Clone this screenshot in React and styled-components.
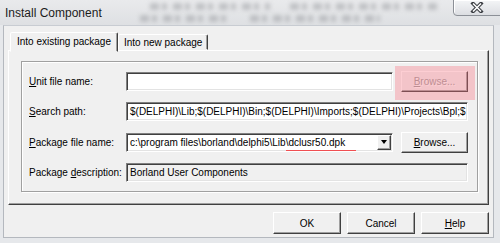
import React from 'react';
import styled, { createGlobalStyle } from 'styled-components';

const Global = createGlobalStyle`
  html, body { margin: 0; padding: 0; background: #e4e6e9; }
  body { font-family: "Liberation Sans", Arial, sans-serif; font-size: 10px; color: #000; }
`;

const Window = styled.div`
  width: 500px;
  height: 243px;
  background: #e6e8eb;
  overflow: hidden;
  display: flex;
  flex-direction: column;
`;

const TitleBar = styled.div`
  position: relative;
  height: 25px;
  flex: none;
  display: flex;
  align-items: center;
  padding-left: 5px;
  background: linear-gradient(#e9eaec, #dee0e3);
  overflow: hidden;
`;

const Title = styled.span`
  position: relative;
  z-index: 1;
  font-size: 12px;
  color: #1c1c1c;
  margin-top: 1px;
`;

// blurred page content seen through the glass frame
const Smudge = styled.div`
  position: absolute;
  left: ${p => p.x}px;
  top: ${p => p.y}px;
  width: ${p => p.w}px;
  height: 7px;
  background: repeating-linear-gradient(90deg, #9a9ca0 0 9px, transparent 9px 12px, #9a9ca0 12px 17px, transparent 17px 23px);
  opacity: 0.5;
  filter: blur(2.2px);
`;

const CloseBox = styled.div`
  position: absolute;
  left: 453px;
  top: -1px;
  width: 52px;
  height: 17px;
  border: 1px solid #8c9097;
  border-radius: 0 0 4px 4px;
  background: linear-gradient(#f4f5f7, #dcdee2);
  box-shadow: inset 1px 1px #fff;
  display: flex;
  align-items: center;
  padding-left: 16px;
  box-sizing: border-box;
`;

const Client = styled.div`
  margin: 0 6px 5px 3px;
  height: 213px;
  box-sizing: border-box;
  background: #f0f0f0;
  border: 1px solid #b4b8be;
  border-top-color: #c8ccd2;
  display: flex;
  flex-direction: column;
  padding: 6px 4px 3px 4px;
`;

const TabStrip = styled.div`
  height: 18px;
  display: flex;
  align-items: flex-end;
  padding-left: 2px;
  position: relative;
  z-index: 1;
`;

const Tab = styled.div`
  box-sizing: border-box;
  height: ${p => (p.active ? '20px' : '16px')};
  margin-bottom: ${p => (p.active ? '-2px' : '0')};
  padding: ${p => (p.active ? '3px 6px 0' : '2px 5px 0')};
  background: #f0f0f0;
  border: 1px solid;
  border-color: #fff #404040 transparent #fff;
  box-shadow: inset -1px 0 #a0a0a0;
  border-radius: 2px 2px 0 0;
  white-space: nowrap;
`;

const Page = styled.div`
  height: 155px;
  box-sizing: border-box;
  border: 1px solid;
  border-color: #fff #404040 #404040 #fff;
  box-shadow: inset -1px -1px #a0a0a0;
  padding: 10px 10px 12px 12px;
  display: flex;
`;

const Group = styled.div`
  flex: 1;
  border: 1px solid #a0a0a0;
  box-shadow: inset 1px 1px #fff, 1px 1px #fff;
  padding: 10px 9px 9px 7px;
  display: grid;
  grid-template-columns: 97px 1fr;
  grid-template-rows: repeat(4, 19px);
  row-gap: 11.33px;
  align-items: center;
`;

const Label = styled.label`
  white-space: nowrap;
  u { text-decoration-thickness: 1px; text-underline-offset: 1px; }
`;

const FieldRow = styled.div`
  display: flex;
  align-items: center;
  gap: 8px;
  height: 19px;
`;

const Field = styled.div`
  flex: 1;
  height: 19px;
  box-sizing: border-box;
  border: 1px solid;
  border-color: #808080 #fff #fff #808080;
  box-shadow: inset 1px 1px #404040, inset -1px -1px #e3e3e3;
  background: ${p => (p.flat ? '#f0f0f0' : '#fff')};
  padding: 0 3px;
  display: flex;
  align-items: center;
  white-space: nowrap;
  overflow: hidden;
  position: relative;
`;

const DropButton = styled.div`
  position: absolute;
  right: 1px;
  top: 1px;
  bottom: 1px;
  width: 14px;
  box-sizing: border-box;
  background: #f0f0f0;
  border: 1px solid;
  border-color: #fff #404040 #404040 #fff;
  box-shadow: inset -1px -1px #a0a0a0;
  display: flex;
  align-items: center;
  justify-content: center;
  &::after {
    content: '';
    border-left: 3.5px solid transparent;
    border-right: 3.5px solid transparent;
    border-top: 4px solid #000;
  }
`;

const Marked = styled.span`
  position: relative;
  &::after {
    content: '';
    position: absolute;
    left: -2px;
    right: -11px;
    bottom: -4px;
    height: 2px;
    background: #f04f52;
  }
`;

const Button = styled.div`
  position: relative;
  width: ${p => p.w || 67}px;
  height: ${p => p.h || 21}px;
  flex: none;
  box-sizing: border-box;
  background: #f0f0f0;
  border: 1px solid;
  border-color: #fff #404040 #404040 #fff;
  box-shadow: inset -1px -1px #a0a0a0;
  display: flex;
  align-items: center;
  justify-content: center;
  color: ${p => (p.disabled ? '#a0a0a0' : '#000')};
  text-shadow: ${p => (p.disabled ? '1px 1px #fff' : 'none')};
`;

const Highlight = styled.div`
  position: absolute;
  left: -7px;
  top: -6px;
  right: -8px;
  bottom: -9px;
  background: rgba(250, 105, 120, 0.33);
  pointer-events: none;
`;

const Footer = styled.div`
  margin-top: 7px;
  display: flex;
  justify-content: flex-end;
  gap: 6px;
`;

export default function App() {
  return (
    <Window>
      <Global />
      <TitleBar>
        <Smudge x={150} y={3} w={120} />
        <Smudge x={290} y={3} w={150} />
        <Smudge x={140} y={15} w={90} />
        <Smudge x={250} y={15} w={130} />
        <Title>Install Component</Title>
        <CloseBox>
          <svg width="14" height="11" viewBox="0 0 14 11">
            <path d="M3 1.5 L11 9.5 M11 1.5 L3 9.5" stroke="#3a3d42" strokeWidth="3.6" strokeLinecap="square" fill="none" />
            <path d="M3 1.5 L11 9.5 M11 1.5 L3 9.5" stroke="#fff" strokeWidth="1.6" fill="none" />
          </svg>
        </CloseBox>
      </TitleBar>
      <Client>
        <TabStrip>
          <Tab active>Into existing package</Tab>
          <Tab>Into new package</Tab>
        </TabStrip>
        <Page>
          <Group>
            <Label><u>U</u>nit file name:</Label>
            <FieldRow>
              <Field />
              <Button disabled>
                <span><u>B</u>rowse...</span>
                <Highlight />
              </Button>
            </FieldRow>

            <Label><u>S</u>earch path:</Label>
            <Field>$(DELPHI)\Lib;$(DELPHI)\Bin;$(DELPHI)\Imports;$(DELPHI)\Projects\Bpl;$</Field>

            <Label><u>P</u>ackage file name:</Label>
            <FieldRow>
              <Field>
                c:\program files\borland\delphi5\Lib\<Marked>dclusr50.dpk</Marked>
                <DropButton />
              </Field>
              <Button><span><u>B</u>rowse...</span></Button>
            </FieldRow>

            <Label>Package <u>d</u>escription:</Label>
            <Field flat>Borland User Components</Field>
          </Group>
        </Page>
        <Footer>
          <Button w={68} h={22}>OK</Button>
          <Button w={68} h={22}>Cancel</Button>
          <Button w={68} h={22}><span><u>H</u>elp</span></Button>
        </Footer>
      </Client>
    </Window>
  );
}
